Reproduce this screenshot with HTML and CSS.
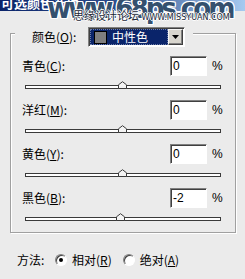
FILE: index.html
```html
<!DOCTYPE html>
<html lang="zh-CN">
<head>
<meta charset="utf-8">
<title>可选颜色选项</title>
<link rel="stylesheet" href="styles.css">
</head>
<body>
<div class="window">
  <div class="titlebar"><span class="title">可选颜色选项</span></div>
  <div class="watermark">
    <span class="wm-big">www.68ps.com</span>
    <span class="wm-small">思缘设计论坛 <span class="wm-latin">WWW.MISSYUAN.COM</span></span>
  </div>
  <div class="dialog">
    <div class="group">
      <div class="legend">
        <span class="legend-label">颜色(<u>O</u>):</span>
        <div class="select">
          <div class="select-value">
            <span class="swatch"></span>
            <span class="select-text">中性色</span>
          </div>
          <div class="select-arrow">
            <svg width="7" height="4" viewBox="0 0 7 4"><path d="M0 0H7L3.5 4Z" fill="#000"/></svg>
          </div>
        </div>
      </div>
      <div class="rows">
        <div class="row">
          <div class="row-top">
            <span class="row-label">青色(<u>C</u>):</span>
            <span class="input">0</span>
            <span class="pct">%</span>
          </div>
          <div class="track"><span class="thumb" style="left: calc(50% - 5px)"><svg width="9" height="8" viewBox="0 0 9 8"><path d="M0.5 7.5V3.8L4.5 0.7L8.5 3.8V7.5Z" fill="#f4f4f4" stroke="#3a3a3a"/></svg></span></div>
        </div>
        <div class="row">
          <div class="row-top">
            <span class="row-label">洋红(<u>M</u>):</span>
            <span class="input">0</span>
            <span class="pct">%</span>
          </div>
          <div class="track"><span class="thumb" style="left: calc(50% - 5px)"><svg width="9" height="8" viewBox="0 0 9 8"><path d="M0.5 7.5V3.8L4.5 0.7L8.5 3.8V7.5Z" fill="#f4f4f4" stroke="#3a3a3a"/></svg></span></div>
        </div>
        <div class="row">
          <div class="row-top">
            <span class="row-label">黄色(<u>Y</u>):</span>
            <span class="input">0</span>
            <span class="pct">%</span>
          </div>
          <div class="track"><span class="thumb" style="left: calc(50% - 5px)"><svg width="9" height="8" viewBox="0 0 9 8"><path d="M0.5 7.5V3.8L4.5 0.7L8.5 3.8V7.5Z" fill="#f4f4f4" stroke="#3a3a3a"/></svg></span></div>
        </div>
        <div class="row">
          <div class="row-top">
            <span class="row-label">黑色(<u>B</u>):</span>
            <span class="input">-2</span>
            <span class="pct">%</span>
          </div>
          <div class="track"><span class="thumb" style="left: calc(49% - 5px)"><svg width="9" height="8" viewBox="0 0 9 8"><path d="M0.5 7.5V3.8L4.5 0.7L8.5 3.8V7.5Z" fill="#f4f4f4" stroke="#3a3a3a"/></svg></span></div>
        </div>
      </div>
    </div>
    <div class="method">
      <span class="method-label">方法:</span>
      <span class="radio checked"></span>
      <span class="radio-label">相对(<u>R</u>)</span>
      <span class="radio"></span>
      <span class="radio-label">绝对(<u>A</u>)</span>
    </div>
  </div>
</div>
</body>
</html>
```
FILE: styles.css
```css
html, body {
  margin: 0;
  padding: 0;
}
body {
  width: 245px;
  height: 279px;
  overflow: hidden;
  background: #ebebeb;
  color: #000;
  font-family: "Noto Sans CJK SC", "Noto Sans", sans-serif;
  font-size: 12px;
  line-height: 14px;
}
u {
  text-decoration: underline;
  text-underline-offset: 1px;
}
.window {
  position: relative;
  height: 279px;
}
.titlebar {
  height: 11px;
  overflow: hidden;
  background: linear-gradient(90deg, #0a246a 0%, #2a4a8a 45%, #a6caf0 100%);
}
.title {
  display: block;
  margin-top: -4px;
  padding-left: 1px;
  color: #fff;
  font-weight: bold;
  font-size: 13px;
  line-height: 14px;
}
.watermark {
  position: absolute;
  left: 0;
  top: 0;
  width: 245px;
  height: 30px;
  pointer-events: none;
}
.wm-big {
  position: absolute;
  left: 47px;
  top: -7px;
  font-family: "DejaVu Sans Condensed", "DejaVu Sans", sans-serif;
  font-weight: bold;
  font-size: 29px;
  line-height: 30px;
  letter-spacing: -3px;
  color: #34506e;
  text-shadow: 1px 0 0 #fff, -1px 0 0 #fff, 0 1px 0 #fff, 0 -1px 0 #fff, 1px 1px 0 #fff, -1px -1px 0 #fff, 1px -1px 0 #fff, -1px 1px 0 #fff;
  white-space: nowrap;
}
.wm-small {
  position: absolute;
  left: 73px;
  top: 9px;
  font-size: 11px;
  line-height: 12px;
  color: #1a2636;
  white-space: nowrap;
  text-shadow: 1px 0 0 #fff, -1px 0 0 #fff, 0 1px 0 #fff, 0 -1px 0 #fff;
}
.wm-latin {
  font-family: "DejaVu Sans", sans-serif;
  font-size: 8px;
}
.dialog {
  padding: 22px 0 0 10px;
}
.group {
  width: 226px;
  height: 200px;
  box-sizing: border-box;
  border: 1px solid #a0a0a0;
  box-shadow: 1px 1px 0 #fff, inset 1px 1px 0 #fff;
}
.legend {
  display: flex;
  align-items: center;
  width: fit-content;
  height: 20px;
  margin: -7px 0 0 4px;
  padding: 0 8px 0 17px;
  background: #ebebeb;
}
.legend-label {
  width: 56px;
}
.select {
  display: flex;
  width: 97px;
  height: 20px;
  box-sizing: border-box;
  border: 1px solid;
  border-color: #808080 #fff #fff #808080;
  box-shadow: inset 1px 1px 0 #404040;
  padding: 1px 1px 1px 1px;
  background: #fff;
}
.select-value {
  flex: 1;
  display: flex;
  align-items: center;
  background: #0a246a;
  outline: 1px dotted #6f7fa8;
  outline-offset: -1px;
}
.swatch {
  width: 11px;
  height: 11px;
  margin-left: 4px;
  background: #7f7f7f;
  border: 1px solid #000;
}
.select-text {
  margin-left: 5px;
  color: #fff;
}
.select-arrow {
  width: 15px;
  display: flex;
  align-items: center;
  justify-content: center;
  box-sizing: border-box;
  background: #d8d5cd;
  border: 1px solid;
  border-color: #f4f4f4 #404040 #404040 #f4f4f4;
  box-shadow: inset -1px -1px 0 #808080;
}
.rows {
  display: flex;
  flex-direction: column;
  padding: 9px 0 0 11px;
}
.row {
  height: 44px;
}
.row-top {
  display: flex;
  align-items: center;
  height: 20px;
}
.row-label {
  width: 148px;
}
.input {
  width: 37px;
  height: 20px;
  box-sizing: border-box;
  padding-left: 2px;
  background: #fff;
  border: 1px solid;
  border-color: #808080 #fff #fff #808080;
  box-shadow: inset 1px 1px 0 #404040;
  font-family: "Liberation Sans", "Noto Sans", sans-serif;
  font-size: 12px;
  line-height: 18px;
}
.pct {
  margin-left: 5px;
  font-family: "Liberation Sans", sans-serif;
  font-size: 12px;
}
.track {
  position: relative;
  width: 196px;
  height: 4px;
  box-sizing: border-box;
  margin: 9px 0 0 3px;
  border: 1px solid #3a3a3a;
  background: #fff;
}
.thumb {
  position: absolute;
  top: -5px;
  width: 9px;
  height: 8px;
  line-height: 0;
}
.method {
  display: flex;
  align-items: center;
  height: 14px;
  margin-top: 20px;
  padding-left: 7px;
}
.method-label {
  width: 38px;
}
.radio {
  display: flex;
  align-items: center;
  justify-content: center;
  width: 12px;
  height: 12px;
  box-sizing: border-box;
  margin-right: 5px;
  border-radius: 50%;
  border: 1px solid;
  border-color: #808080 #fff #fff #808080;
  box-shadow: inset 1px 1px 0 #404040;
  background: #fff;
}
.radio.checked::after {
  content: "";
  width: 4px;
  height: 4px;
  border-radius: 50%;
  background: #000;
}
.radio-label {
  margin-right: 11px;
}
```
